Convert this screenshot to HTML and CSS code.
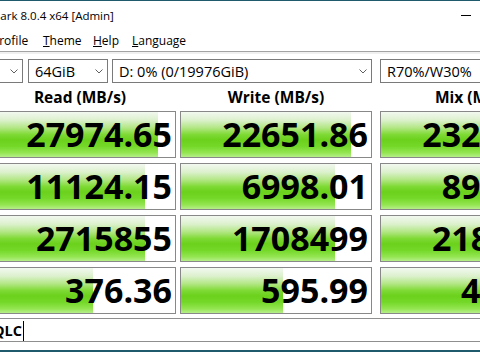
FILE: index.html
```html
<!DOCTYPE html>
<html lang="en">
<head>
  <meta charset="UTF-8" />
  <meta name="viewport" content="width=device-width, initial-scale=1.0"/>
  <title>CrystalDiskMark 8.0.4 x64 [Admin]</title>
  <link rel="stylesheet" href="styles.css">
</head>
<body>
  <div class="window">
    <div class="titlebar">
      <span class="title">Mark 8.0.4 x64 [Admin]</span>
      <span class="minimize"></span>
    </div>

    <div class="menubar">
      <span class="menu-item profile"><u>P</u>rofile</span>
      <span class="menu-item theme"><u>T</u>heme</span>
      <span class="menu-item help"><u>H</u>elp</span>
      <span class="menu-item"><u>L</u>anguage</span>
    </div>
    <div class="band"></div>

    <div class="toolbar">
      <div class="combo count">
        <span>5</span>
        <svg class="chevron" width="8" height="5" viewBox="0 0 8 5"><polyline points="0.5,0.5 4,4 7.5,0.5"/></svg>
      </div>
      <div class="combo size">
        <span>64GiB</span>
        <svg class="chevron" width="8" height="5" viewBox="0 0 8 5"><polyline points="0.5,0.5 4,4 7.5,0.5"/></svg>
      </div>
      <div class="combo drive">
        <span>D: 0% (0/19976GiB)</span>
        <svg class="chevron" width="8" height="5" viewBox="0 0 8 5"><polyline points="0.5,0.5 4,4 7.5,0.5"/></svg>
      </div>
      <div class="combo mix">
        <span>R70%/W30%</span>
        <svg class="chevron" width="8" height="5" viewBox="0 0 8 5"><polyline points="0.5,0.5 4,4 7.5,0.5"/></svg>
      </div>
    </div>

    <div class="results">
      <div class="column">
        <div class="col-head">Read (MB/s)</div>
        <div class="cell"><div class="bar" style="width: 173px"></div><span class="value">27974.65</span></div>
        <div class="cell"><div class="bar" style="width: 160px"></div><span class="value">11124.15</span></div>
        <div class="cell"><div class="bar" style="width: 160px"></div><span class="value">2715855</span></div>
        <div class="cell"><div class="bar" style="width: 108px"></div><span class="value">376.36</span></div>
      </div>
      <div class="column">
        <div class="col-head">Write (MB/s)</div>
        <div class="cell"><div class="bar" style="width: 170px"></div><span class="value">22651.86</span></div>
        <div class="cell"><div class="bar" style="width: 154px"></div><span class="value">6998.01</span></div>
        <div class="cell"><div class="bar" style="width: 154px"></div><span class="value">1708499</span></div>
        <div class="cell"><div class="bar" style="width: 102px"></div><span class="value">595.99</span></div>
      </div>
      <div class="column mix-col">
        <div class="col-head">Mix (MB/s)</div>
        <div class="cell"><div class="bar" style="width: 172px"></div><span class="value">23264.07</span></div>
        <div class="cell"><div class="bar" style="width: 158px"></div><span class="value">8946.13</span></div>
        <div class="cell"><div class="bar" style="width: 158px"></div><span class="value">2186432</span></div>
        <div class="cell"><div class="bar" style="width: 140px"></div><span class="value">445.72</span></div>
      </div>
    </div>

    <div class="comment">QLC<span class="caret"></span></div>
    <div class="frame-bottom"></div>
  </div>
</body>
</html>
```

FILE: styles.css
```css
body {
  margin: 0;
  font-family: 'Open Sans', 'Noto Sans', sans-serif;
  background-color: #fff;
  color: #000;
}

.window {
  width: 480px;
  height: 352px;
  overflow: hidden;
  border-top: 1px solid #1f5a6c;
  box-sizing: border-box;
  position: relative;
}

/* title bar */
.titlebar {
  height: 29px;
  display: flex;
  align-items: center;
  font-size: 11.5px;
  line-height: 29px;
}

.title {
  margin-left: -10px;
  white-space: nowrap;
}

.minimize {
  margin-left: auto;
  margin-right: 9px;
  width: 10px;
  height: 1px;
  background-color: #000;
  margin-top: -1px;
}

/* menu */
.menubar {
  height: 21px;
  display: flex;
  font-size: 12px;
  line-height: 21px;
  border-bottom: 1px solid #a3a3a3;
  white-space: nowrap;
}

.menu-item u {
  text-underline-offset: 1px;
}

.profile {
  margin-left: -8px;
  width: 51px;
}

.theme {
  width: 50px;
}

.help {
  width: 39px;
}

.band {
  height: 2px;
  background-color: #f0f0f0;
}

/* combo boxes */
.toolbar {
  display: flex;
  padding-top: 5px;
  margin-left: -17px;
}

.combo {
  flex-shrink: 0;
  height: 24px;
  box-sizing: border-box;
  border: 1px solid #7a7a7a;
  display: flex;
  align-items: center;
  justify-content: space-between;
  padding: 1px 4px 0 6px;
  font-size: 14.5px;
  white-space: nowrap;
}

.count {
  width: 40px;
}

.size {
  width: 80px;
  margin-left: 5px;
}

.drive {
  width: 260px;
  margin-left: 4px;
}

.mix {
  width: 192px;
  margin-left: 8px;
}

.chevron {
  fill: none;
  stroke: #606060;
  stroke-width: 1;
  margin-top: -1px;
}

/* result grid */
.results {
  display: flex;
  gap: 4px;
  margin-left: -16px;
}

.column {
  flex-shrink: 0;
  width: 192px;
  display: flex;
  flex-direction: column;
  gap: 5px;
}

.mix-col {
  margin-left: 4px;
}

.col-head {
  height: 28px;
  margin-bottom: -5px;
  padding-top: 1px;
  box-sizing: border-box;
  text-align: center;
  font-size: 15.5px;
  font-weight: bold;
  line-height: 27px;
  white-space: nowrap;
}

.cell {
  height: 47px;
  box-sizing: border-box;
  border: 1px solid #888;
  position: relative;
  display: flex;
  justify-content: flex-end;
  align-items: center;
  padding-right: 3px;
}

.bar {
  position: absolute;
  left: 0;
  top: 0;
  bottom: 0;
  background: linear-gradient(to bottom, #f2f8ef 0%, #dcf1cd 18%, #b0e680 36%, #7fda36 50%, #6bd11c 62%, #74d828 76%, #92e54f 90%, #b6ee8a 100%);
}

.value {
  position: relative;
  font-size: 34px;
  font-weight: bold;
  line-height: 45px;
  white-space: nowrap;
}

/* comment box */
.comment {
  margin-top: 4px;
  margin-left: -20px;
  width: 520px;
  height: 24px;
  box-sizing: border-box;
  border: 1px solid #8f8f8f;
  padding: 1px 0 0 12px;
  font-size: 14.5px;
  font-weight: bold;
  line-height: 21px;
  display: flex;
  align-items: center;
}

.caret {
  width: 1px;
  height: 20px;
  margin-left: 1px;
  background-color: #000;
}

.frame-bottom {
  margin-top: 8px;
  height: 2px;
  background-color: #1f5a6c;
}
```
